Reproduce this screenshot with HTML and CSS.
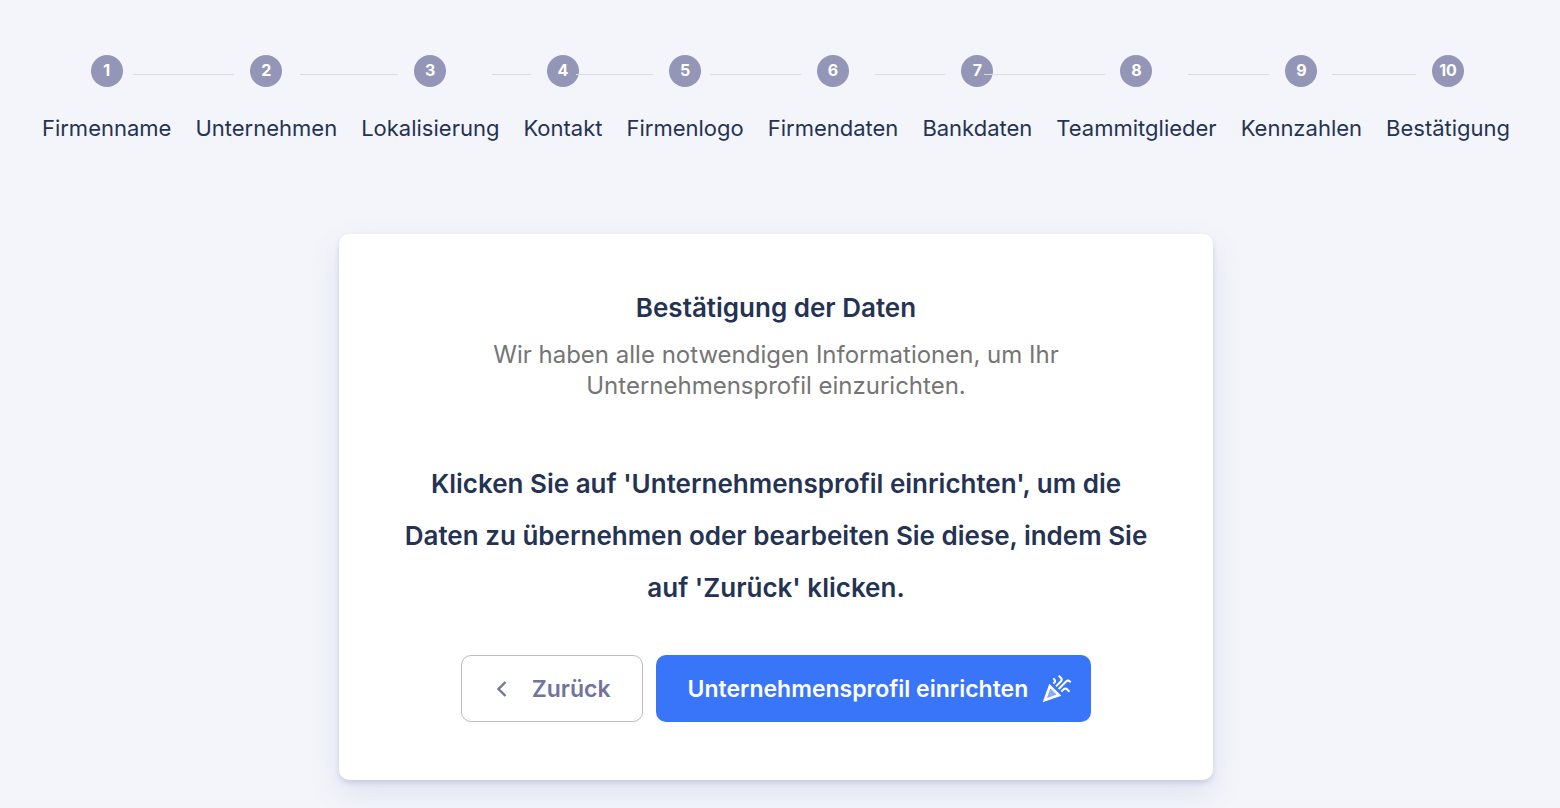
FILE: index.html
```html
<!DOCTYPE html>
<html lang="de">
<head>
    <meta charset="UTF-8">
    <meta name="viewport" content="width=device-width, initial-scale=1.0">
    <title>Bestätigung der Daten</title>
    <link rel="stylesheet" href="styles.css">
</head>
<body>

<ol class="stepper">
    <li class="step"><span class="step-number">1</span><span class="step-label">Firmenname</span></li>
    <li class="step"><span class="step-number">2</span><span class="step-label">Unternehmen</span></li>
    <li class="step"><span class="step-number">3</span><span class="step-label">Lokalisierung</span></li>
    <li class="step"><span class="step-number">4</span><span class="step-label">Kontakt</span></li>
    <li class="step"><span class="step-number">5</span><span class="step-label">Firmenlogo</span></li>
    <li class="step"><span class="step-number">6</span><span class="step-label">Firmendaten</span></li>
    <li class="step"><span class="step-number">7</span><span class="step-label">Bankdaten</span></li>
    <li class="step"><span class="step-number">8</span><span class="step-label">Teammitglieder</span></li>
    <li class="step"><span class="step-number">9</span><span class="step-label">Kennzahlen</span></li>
    <li class="step"><span class="step-number">10</span><span class="step-label">Bestätigung</span></li>
</ol>

<main class="card">
    <h1>Bestätigung der Daten</h1>
    <p class="subtitle">Wir haben alle notwendigen Informationen, um Ihr Unternehmensprofil einzurichten.</p>
    <p class="hint">Klicken Sie auf 'Unternehmensprofil einrichten', um die Daten zu übernehmen oder bearbeiten Sie diese, indem Sie auf 'Zurück' klicken.</p>
    <div class="actions">
        <button type="button" class="btn btn-back">
            <svg class="icon-back" viewBox="0 0 12 18" aria-hidden="true">
                <path d="M9.5 2 2.5 9l7 7" fill="none" stroke="currentColor" stroke-width="2.4"/>
            </svg>
            Zurück
        </button>
        <button type="button" class="btn btn-submit">
            Unternehmensprofil einrichten
            <svg class="icon-party" viewBox="0 0 24 24" fill="currentColor" aria-hidden="true">
                <path opacity=".4" d="m5.3 18.7 7.05-2.52-4.53-4.53z"/>
                <path d="m2 22 14-5-9-9-5 14zm10.35-5.82L5.3 18.7l2.52-7.05 4.53 4.53z"/>
                <path d="m14.53 12.53 5.59-5.59c.49-.49 1.28-.49 1.77 0l.59.59 1.06-1.06-.59-.59a2.758 2.758 0 0 0-3.89 0l-5.59 5.59 1.06 1.06z"/>
                <path d="m10.06 6.88-.59.59 1.06 1.06.59-.59a2.758 2.758 0 0 0 0-3.89l-.59-.59-1.06 1.07.59.59c.48.48.48 1.28 0 1.76z"/>
                <path d="m17.06 11.88-1.59 1.59 1.06 1.06 1.59-1.59c.49-.49 1.28-.49 1.77 0l1.61 1.61 1.06-1.06-1.61-1.61a2.758 2.758 0 0 0-3.89 0z"/>
                <path d="m15.06 5.88-3.59 3.59 1.06 1.06 3.59-3.59a2.758 2.758 0 0 0 0-3.89l-1.59-1.59-1.06 1.06 1.59 1.59c.48.49.48 1.29 0 1.77z"/>
            </svg>
        </button>
    </div>
</main>

</body>
</html>
```

FILE: styles.css
```css
* {
    box-sizing: border-box;
}
body {
    margin: 0;
    padding: 55px 8px 28px 0;
    background-color: #f3f5fa;
    color: #253353;
    font-family: Inter, "Liberation Sans", sans-serif;
}
.stepper {
    display: flex;
    justify-content: center;
    margin: 0 0 92px;
    padding: 0;
    list-style: none;
}
.step {
    position: relative;
    display: flex;
    flex-direction: column;
    align-items: center;
    gap: 28px;
    padding: 0 12px;
}
/* connector to the previous step */
.step + .step::before {
    content: "";
    position: absolute;
    top: 19px;
    left: calc(-50% + 32px);
    right: calc(50% + 32px);
    border-top: 1px solid #dcdde1;
}
.step-number {
    width: 32px;
    height: 32px;
    border-radius: 50%;
    background-color: #9496b8;
    color: #fff;
    font-size: 16px;
    font-weight: 700;
    line-height: 31px;
    text-align: center;
}
.step-label {
    font-size: 22px;
    font-weight: 400;
    line-height: 27px;
    white-space: nowrap;
}
.card {
    max-width: 874px;
    margin: 0 auto;
    padding: 58px 64px;
    border-radius: 10px;
    background-color: #fff;
    box-shadow: 0 3px 5px rgba(70, 60, 120, 0.16), 0 14px 32px rgba(80, 110, 180, 0.12);
    text-align: center;
}
h1 {
    margin: 0 0 15px;
    font-size: 26px;
    font-weight: 600;
    line-height: 32px;
}
.subtitle {
    max-width: 660px;
    margin: 0 auto 57px;
    color: #757575;
    font-size: 24px;
    line-height: 31px;
}
.hint {
    margin: 0 0 41px;
    font-size: 26px;
    font-weight: 600;
    line-height: 52px;
}
.actions {
    display: flex;
    justify-content: center;
    gap: 13px;
}
.btn {
    display: flex;
    align-items: center;
    height: 67px;
    border: 1px solid transparent;
    border-radius: 10px;
    font-family: inherit;
    font-size: 23px;
    font-weight: 600;
    cursor: pointer;
}
.btn-back {
    gap: 24px;
    padding: 0 31px 0 34px;
    border-color: #b9bad0;
    background-color: #fff;
    color: #7274a0;
}
.btn-submit {
    gap: 12px;
    padding: 0 18px 0 31px;
    background-color: #3975f8;
    color: #fff;
}
.icon-back {
    width: 12px;
    height: 18px;
}
.icon-party {
    width: 32px;
    height: 32px;
}
```
